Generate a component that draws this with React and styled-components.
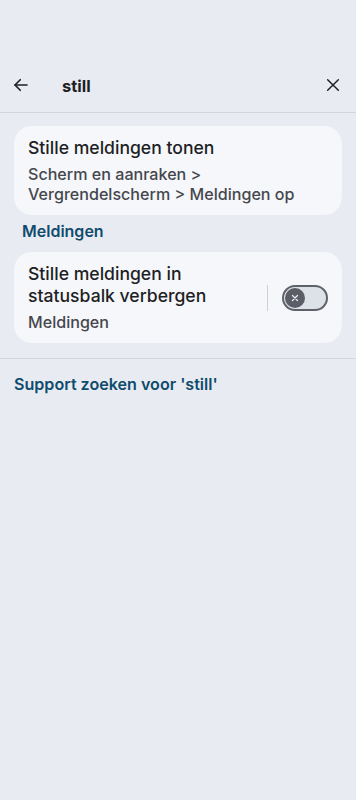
import React from "react";
import styled, { createGlobalStyle } from "styled-components";

const Global = createGlobalStyle`
  html, body { margin: 0; padding: 0; background: #e9ebf2; }
  body { font-family: Inter, Roboto, "Noto Sans", sans-serif; -webkit-font-smoothing: antialiased; }
`;

const Page = styled.div`
  width: 356px;
  min-height: 800px;
  background: #e9ebf2;
  padding-top: 57px;
  box-sizing: border-box;
`;

const Toolbar = styled.div`
  height: 55px;
  display: flex;
  align-items: center;
  padding: 0 12px 0 10px;
  border-bottom: 1px solid #d4d6dc;
`;

const IconBtn = styled.button`
  width: 22px;
  height: 22px;
  padding: 0;
  border: 0;
  background: none;
  display: flex;
  align-items: center;
  justify-content: center;
  color: #1d1f24;
`;

const Query = styled.div`
  flex: 1;
  margin-left: 30px;
  font-size: 16.5px;
  font-weight: 700;
  color: #1d1f24;
  padding-top: 2px;
`;

const Content = styled.div`
  padding: 13px 14px 0;
`;

const Card = styled.div`
  background: #f6f7fb;
  border-radius: 18px;
  padding: 11px 14px 11px;
  display: flex;
  align-items: center;
`;

const CardText = styled.div`
  flex: 1;
`;

const Title = styled.div`
  font-size: 17.6px;
  font-weight: 500;
  color: #1d1f24;
  line-height: 22px;
`;

const Sub = styled.div`
  font-size: 16.1px;
  font-weight: 500;
  color: #45474d;
  line-height: 20px;
  margin-top: 5px;
`;

const SectionLabel = styled.div`
  font-size: 16px;
  font-weight: 600;
  color: #0f4c6d;
  line-height: 20px;
  padding: 6px 8px 11px;
`;

const Sep = styled.div`
  width: 1px;
  height: 26px;
  background: #cdd0d6;
  margin: 0 14px 0 10px;
`;

const Switch = styled.div`
  width: 46px;
  height: 26px;
  border-radius: 14px;
  border: 2px solid #5f6268;
  background: #dde1e8;
  box-sizing: border-box;
  display: flex;
  align-items: center;
  padding-left: 1px;
`;

const Knob = styled.div`
  width: 20px;
  height: 20px;
  border-radius: 50%;
  background: #5b5e66;
  display: flex;
  align-items: center;
  justify-content: center;
`;

const Divider = styled.div`
  height: 1px;
  background: #d4d6dc;
  margin-top: 15px;
`;

const Link = styled.div`
  padding: 15px 14px;
  font-size: 16.1px;
  font-weight: 600;
  line-height: 20px;
  color: #0f4c6d;
`;

export default function App() {
  return (
    <Page>
      <Global />
      <Toolbar>
        <IconBtn aria-label="back">
          <svg width="18" height="18" viewBox="0 0 24 24" fill="none" stroke="#1d1f24" strokeWidth="2.2" strokeLinecap="round" strokeLinejoin="round">
            <path d="M20 12H4" />
            <path d="M11 5l-7 7 7 7" />
          </svg>
        </IconBtn>
        <Query>still</Query>
        <IconBtn aria-label="clear">
          <svg width="16" height="16" viewBox="0 0 24 24" fill="none" stroke="#1d1f24" strokeWidth="2.2" strokeLinecap="round">
            <path d="M4 4l16 16M20 4L4 20" />
          </svg>
        </IconBtn>
      </Toolbar>
      <Content>
        <Card>
          <CardText>
            <Title>Stille meldingen tonen</Title>
            <Sub>Scherm en aanraken &gt;<br />Vergrendelscherm &gt; Meldingen op</Sub>
          </CardText>
        </Card>
        <SectionLabel>Meldingen</SectionLabel>
        <Card>
          <CardText>
            <Title>Stille meldingen in<br />statusbalk verbergen</Title>
            <Sub>Meldingen</Sub>
          </CardText>
          <Sep />
          <Switch>
            <Knob>
              <svg width="10" height="10" viewBox="0 0 10 10" stroke="#e9ebf2" strokeWidth="1.3" strokeLinecap="round">
                <path d="M2.5 2.5l5 5M7.5 2.5l-5 5" />
              </svg>
            </Knob>
          </Switch>
        </Card>
      </Content>
      <Divider />
      <Link>Support zoeken voor 'still'</Link>
    </Page>
  );
}
